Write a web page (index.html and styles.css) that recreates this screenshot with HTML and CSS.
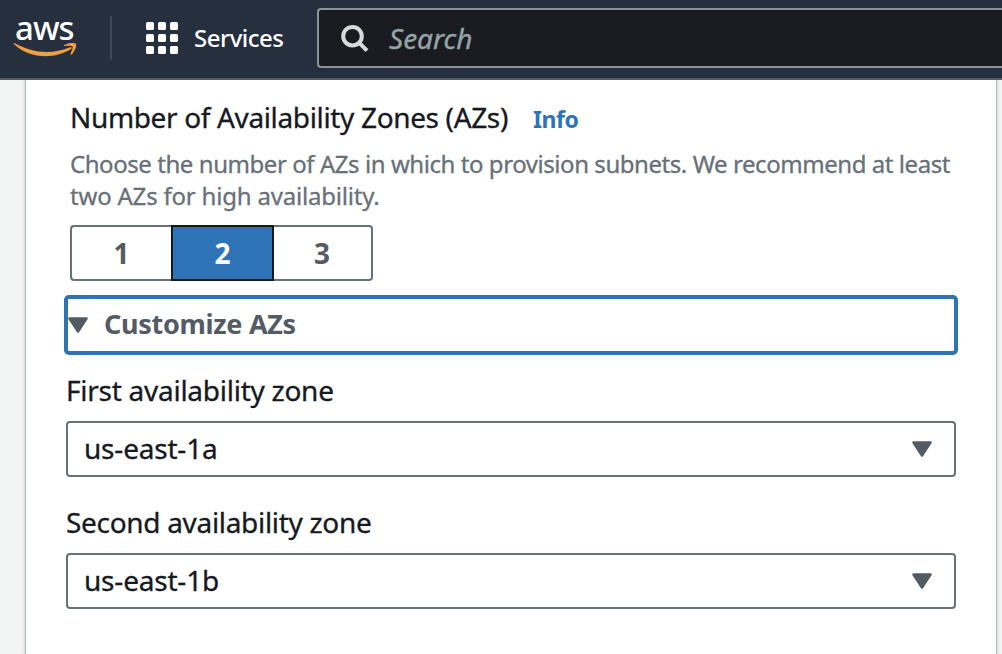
FILE: index.html
```html
<!DOCTYPE html>
<html lang="en">
<head>
<meta charset="utf-8">
<title>Create VPC</title>
<link rel="stylesheet" href="styles.css">
</head>
<body>
<header class="topbar">
  <div class="logo">
    <span class="logo-text">aws</span>
    <svg class="logo-smile" width="64" height="16" viewBox="0 0 64 16"><path d="M1 1.2C0 .6.8-.2 1.800.3C20 10.500 39 11.500 56.500 4.500C58.500 3.600 59.500 5 58 6C41 16.800 16 15.500 1 1.200Z" fill="#f29f3d"/><path d="M51 2.200C55.500-.4 62-.4 63 1C64 3 61.500 9 58.500 11.500C57.800 12.100 57.200 11.700 57.500 11C58.800 7.800 60.200 4.500 59.500 3.500C58.700 2.500 54.500 2.700 51.700 3C50.800 3 50.500 2.600 51 2.200Z" fill="#f29f3d"/></svg>
  </div>
  <div class="divider"></div>
  <button class="services">
    <svg width="32" height="32" viewBox="0 0 32 32" fill="#fff"><rect width="8" height="8" rx="1.500"/><rect x="12" width="8" height="8" rx="1.500"/><rect x="24" width="8" height="8" rx="1.500"/><rect y="12" width="8" height="8" rx="1.500"/><rect x="12" y="12" width="8" height="8" rx="1.500"/><rect x="24" y="12" width="8" height="8" rx="1.500"/><rect y="24" width="8" height="8" rx="1.500"/><rect x="12" y="24" width="8" height="8" rx="1.500"/><rect x="24" y="24" width="8" height="8" rx="1.500"/></svg>
    <span class="services-text">Services</span>
  </button>
  <div class="search">
    <svg width="28" height="28" viewBox="0 -.7 28 28" fill="none" stroke="#d5dbdb" stroke-width="4"><circle cx="11.500" cy="11.500" r="9.300"/><path d="M18 18l8 8"/></svg>
    <span class="search-text">Search</span>
  </div>
</header>
<main class="page">
  <section class="card">
    <div class="title-row"><h2 class="title">Number of Availability Zones (AZs)</h2><a class="info">Info</a></div>
    <p class="hint"><span class="hint-a">Choose the number of AZs in which to provision subnets. We recommend at least</span><br><span class="hint-b">two AZs for high availability.</span></p>
    <div class="segments">
      <button class="segment first">1</button><button class="segment active">2</button><button class="segment last">3</button>
    </div>
    <div class="expander">
      <svg class="caret" width="20" height="16" viewBox="0 0 20 16"><path d="M1.500 1.500h17L10 14.500z" fill="#545b64" stroke="#545b64" stroke-width="2.500" stroke-linejoin="round"/></svg>
      <span class="expander-text">Customize AZs</span>
    </div>
    <div class="field">
      <label class="label label-first">First availability zone</label>
      <div class="select"><span class="value">us-east-1a</span><svg class="caret" width="20" height="16" viewBox="0 0 20 16"><path d="M1.500 1.500h17L10 14.500z" fill="#545b64" stroke="#545b64" stroke-width="2.500" stroke-linejoin="round"/></svg></div>
    </div>
    <div class="field">
      <label class="label label-second">Second availability zone</label>
      <div class="select"><span class="value">us-east-1b</span><svg class="caret" width="20" height="16" viewBox="0 0 20 16"><path d="M1.500 1.500h17L10 14.500z" fill="#545b64" stroke="#545b64" stroke-width="2.500" stroke-linejoin="round"/></svg></div>
    </div>
  </section>
</main>
</body>
</html>
```
FILE: styles.css
```css
* { box-sizing: border-box; }
body {
  margin: 0;
  width: 1002px;
  height: 654px;
  overflow: hidden;
  display: flex;
  flex-direction: column;
  background: #f2f3f3;
  color: #16191f;
  font-family: "Noto Sans", "Open Sans", sans-serif;
  white-space: nowrap;
}
button { background: none; border: 0; padding: 0; margin: 0; font: inherit; }
svg { display: block; flex: none; overflow: visible; }
.topbar {
  flex: none;
  height: 80px;
  background: #262f3e;
  border-bottom: 2px solid #545b64;
  display: flex;
  align-items: flex-start;
}
.logo {
  width: 110px;
  height: 78px;
  padding: 10px 0 0 13px;
  display: flex;
  flex-direction: column;
}
.logo-text {
  height: 33px;
  padding-left: 2px;
  color: #fff;
  font-size: 33px;
  font-weight: 500;
  line-height: 35px;
  letter-spacing: -1px;
}
.logo-smile { flex: none; }
.divider { width: 2px; height: 44px; margin-top: 16px; background: #414750; flex: none; }
.services {
  display: flex;
  align-items: center;
  gap: 16px;
  width: 205px;
  padding-left: 34px;
  height: 76px;
  color: #fff;
  text-align: left;
}
.services-text { font-size: 24px; font-weight: 500; letter-spacing: -0.5px; line-height: 34px; }
.search {
  flex: 1;
  height: 60px;
  margin-top: 8px;
  border: 2px solid #879596;
  border-right: 0;
  border-radius: 4px 0 0 4px;
  background: #1a1b20;
  display: flex;
  align-items: center;
  gap: 20px;
  padding-left: 22px;
}
.search-text { color: #95a5a6; font-size: 28px; font-style: italic; -webkit-text-stroke: 0.35px; }
.page { flex: 1; padding: 0 5px 0 25px; display: flex; }
.card {
  flex: 1;
  min-width: 0;
  background: #fff;
  border-left: 1px solid #aab7b8;
  border-right: 1px solid #aab7b8;
  box-shadow: 0 0 2px 1px #d5dbdb;
  clip-path: inset(0 -6px);
  padding: 17px 38px 0 38px;
}
.title-row { display: flex; align-items: baseline; padding-left: 6px; height: 40px; line-height: 40px; }
.title { margin: 0; width: 463px; font-size: 28px; font-weight: 400; letter-spacing: -0.35px; -webkit-text-stroke: 0.3px; }
.info { color: #2e73b8; font-size: 23px; font-weight: 700; letter-spacing: -0.4px; }
.hint { margin: 11px 0 13px 6px; color: #687078; font-size: 24px; line-height: 32px; -webkit-text-stroke: 0.3px; }
.hint-a { letter-spacing: -0.44px; }
.hint-b { letter-spacing: -0.2px; }
.segments { display: flex; padding-left: 6px; }
.segment {
  width: 102px;
  height: 56px;
  border: 2px solid #687078;
  color: #545b64;
  font-size: 28px;
  font-weight: 700;
  line-height: 50px;
}
.first { border-radius: 4px 0 0 4px; border-right: 0; width: 101px; }
.active { background: #2f73b7; border-color: #16191f; color: #fff; width: 103px; }
.last { border-radius: 0 4px 4px 0; border-left: 0; width: 99px; padding-right: 1px; }
.expander {
  height: 60px;
  margin: 14px 0 0 0;
  border: 4px solid #2f73b7;
  border-radius: 5px;
  display: flex;
  align-items: center;
  gap: 16px;
}
.expander-text { color: #545b64; font-size: 27px; font-weight: 700; letter-spacing: -0.3px; line-height: 38px; padding-bottom: 2px; }
.field { padding: 16px 2px 0 2px; height: 132px; }
.label { display: block; height: 40px; line-height: 38px; font-size: 28px; margin-bottom: 10px; -webkit-text-stroke: 0.3px; }
.label-first { letter-spacing: -0.26px; }
.label-second { letter-spacing: -0.31px; }
.select {
  height: 56px;
  border: 2px solid #687078;
  border-radius: 4px;
  display: flex;
  align-items: center;
  justify-content: space-between;
  padding: 0 22px 0 16px;
}
.value { font-size: 28px; line-height: 38px; padding-bottom: 2px; letter-spacing: -0.2px; -webkit-text-stroke: 0.3px; }
```
